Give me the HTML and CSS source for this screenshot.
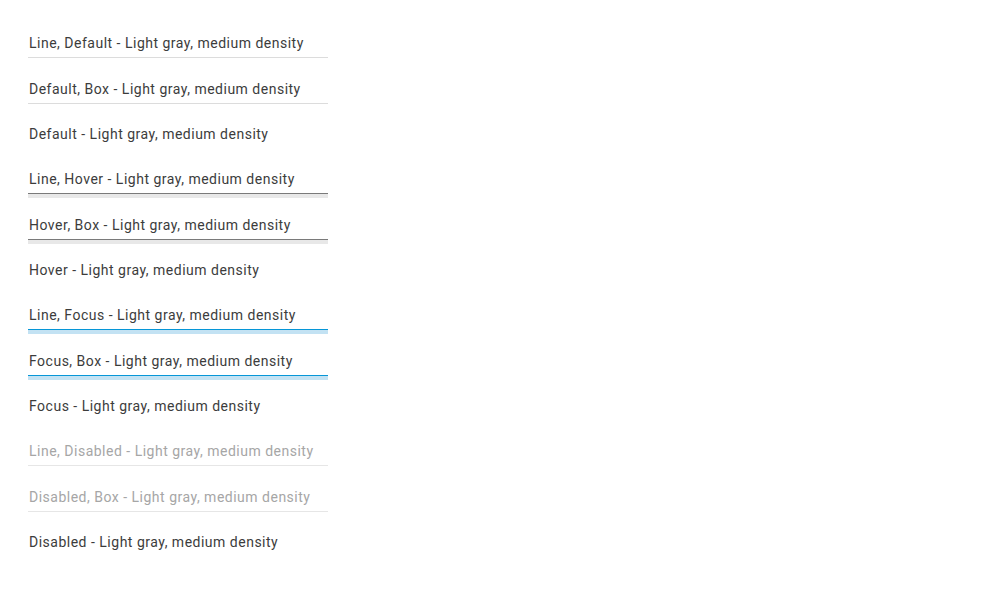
FILE: index.html
```html
<!DOCTYPE html>
<html>
<head>
<meta charset="utf-8">
<link rel="stylesheet" href="styles.css">
</head>
<body>
<div class="list">
  <div class="field line">Line, Default - Light gray, medium density</div>
  <div class="field line">Default, Box - Light gray, medium density</div>
  <div class="field plain">Default - Light gray, medium density</div>
  <div class="field line hover">Line, Hover - Light gray, medium density</div>
  <div class="field line hover">Hover, Box - Light gray, medium density</div>
  <div class="field plain">Hover - Light gray, medium density</div>
  <div class="field line focus">Line, Focus - Light gray, medium density</div>
  <div class="field line focus">Focus, Box - Light gray, medium density</div>
  <div class="field plain">Focus - Light gray, medium density</div>
  <div class="field line disabled">Line, Disabled - Light gray, medium density</div>
  <div class="field line disabled">Disabled, Box - Light gray, medium density</div>
  <div class="field plain">Disabled - Light gray, medium density</div>
</div>
</body>
</html>
```
FILE: styles.css
```css
html, body {
  margin: 0;
  padding: 0;
  background: #ffffff;
}
body {
  font-family: Roboto, "Liberation Sans", sans-serif;
  font-size: 14px;
  letter-spacing: 0.5px;
  color: #3c3c3c;
}
.list {
  padding: 24px 0 0 28px;
  display: flex;
  flex-direction: column;
  gap: 11px;
}
.field {
  width: 300px;
  box-sizing: border-box;
  height: 34px;
  padding: 9px 0 4px 1px;
  line-height: 20px;
  white-space: nowrap;
  border-bottom: 1px solid transparent;
}
.field:nth-child(3n+2) {
  margin-top: 1px;
}
.field.line {
  border-bottom-color: #dcdcdc;
}
.field.hover {
  border-bottom-color: #7a7a7a;
  box-shadow: 0 4px 0 0 #e8e8e8;
}
.field.focus {
  border-bottom-color: #0696d7;
  box-shadow: 0 4px 0 0 #c3e2f3;
}
.field.disabled {
  color: #a6a6a6;
  border-bottom-color: #e6e6e6;
}
```
